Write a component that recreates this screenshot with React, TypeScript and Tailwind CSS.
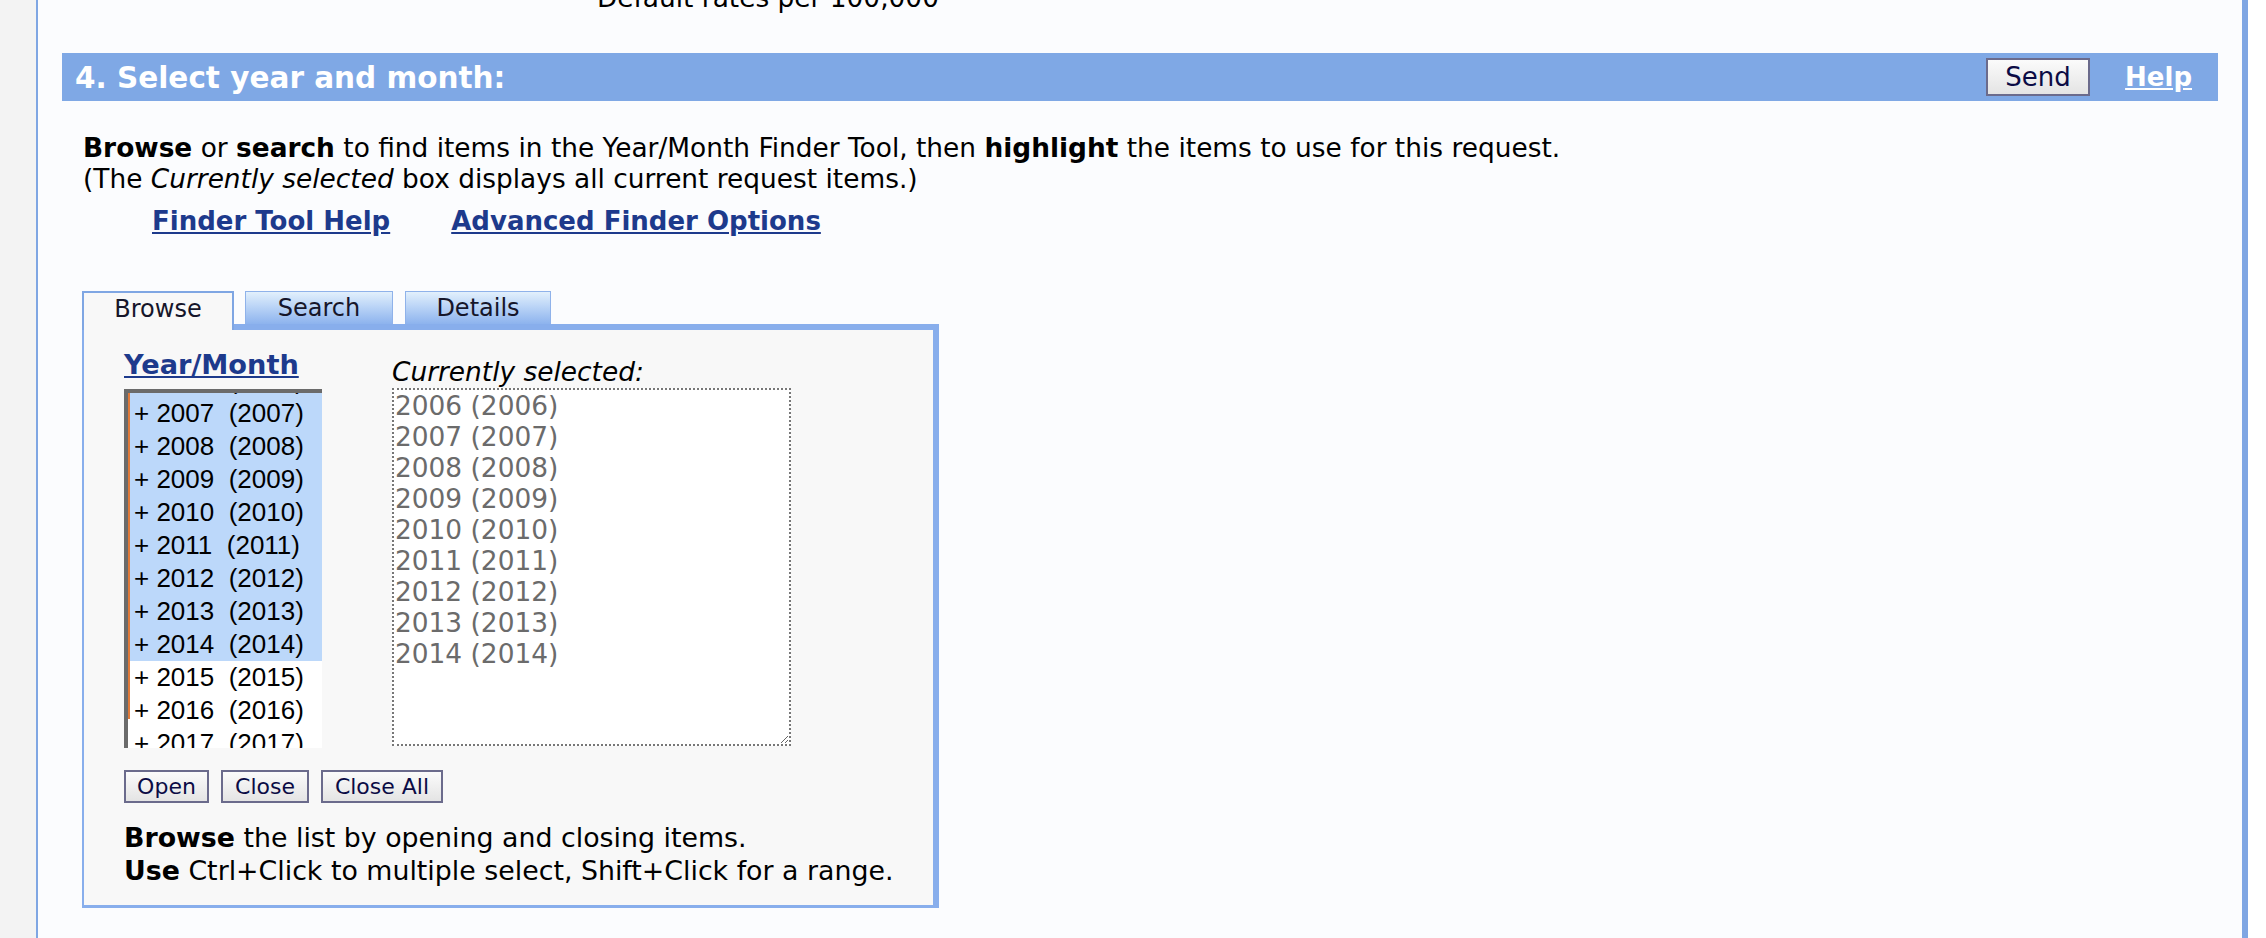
import React from 'react';

const years = ['2006', '2007', '2008', '2009', '2010', '2011', '2012', '2013', '2014', '2015', '2016', '2017'];
const selected = ['2006', '2007', '2008', '2009', '2010', '2011', '2012', '2013', '2014'];

const FormButton = ({ label, className }: { label: string; className: string }) => (
    <button
        type="button"
        className={`flex items-center justify-center border-2 border-[#6b6b8c] bg-linear-to-b from-[#fbfbfb] to-[#e4e4e4] text-[#0b0b45] ${className}`}
    >
        {label}
    </button>
);

const App = () => {
    return (
        <div className="flex min-h-screen w-full overflow-hidden bg-[#f3f3f3] font-['DejaVu_Sans',sans-serif] text-[26.4px] text-black">
            <div className="w-[36px] shrink-0" />
            <div className="w-[2212px] shrink-0 border-l-2 border-r-[6px] border-[#7fa6e3] bg-[#fbfcfe] pb-[40px]">
                {/* tail of the previous section */}
                <div className="-mt-[18px] pl-[559px] leading-[32px]">Default rates per 100,000</div>

                {/* section header */}
                <div className="mx-[24px] mt-[39px] flex h-[48px] items-center bg-[#7fa8e5] pl-[13px] pr-[26px]">
                    <span className="pt-[3px] text-[29.5px] font-bold text-white">4. Select year and month:</span>
                    <div className="ml-auto flex items-center gap-[35px]">
                        <FormButton label="Send" className="h-[38px] w-[104px] text-[26px]" />
                        <a href="#" className="text-[26px] font-bold text-white underline">Help</a>
                    </div>
                </div>

                {/* intro */}
                <div className="mt-[31px] pl-[45px] leading-[31px]">
                    <p>
                        <b>Browse</b> or <b>search</b> to find items in the Year/Month Finder Tool, then <b>highlight</b> the items to use for this request.
                    </p>
                    <p>
                        (The <i>Currently selected</i> box displays all current request items.)
                    </p>
                </div>
                <div className="mt-[11px] flex gap-[61px] pl-[114px] text-[26px] leading-[32px]">
                    <a href="#" className="font-bold text-[#1d3a8c] underline">Finder Tool Help</a>
                    <a href="#" className="font-bold text-[#1d3a8c] underline">Advanced Finder Options</a>
                </div>

                {/* finder tool */}
                <div className="ml-[44px] mt-[54px] w-[857px]">
                    <div className="flex items-end text-[24px]">
                        <div className="relative z-10 -mb-[6px] flex h-[39px] w-[152px] items-center justify-center border-x-2 border-t-2 border-[#7fa6e3] bg-[#f8f8f8] pb-[6px] text-[#16162a]">
                            Browse
                        </div>
                        <div className="ml-[11px] flex h-[33px] w-[148px] items-center justify-center border border-b-0 border-[#8fb2ea] bg-linear-to-b from-[#e2f0fc] to-[#8db3ee] text-[#16162a]">
                            Search
                        </div>
                        <div className="ml-[12px] flex h-[33px] w-[146px] items-center justify-center border border-b-0 border-[#8fb2ea] bg-linear-to-b from-[#e2f0fc] to-[#8db3ee] text-[#16162a]">
                            Details
                        </div>
                    </div>
                    <div className="border-b-[3px] border-l-2 border-r-[6px] border-t-[6px] border-[#88aeec] bg-[#f8f8f8] pb-[18px] pl-[40px] pt-[19px]">
                        <div className="flex items-start">
                            <div className="flex w-[198px] flex-col">
                                <a href="#" className="self-start text-[27.2px] font-bold leading-[32px] text-[#1d3a8c] underline">Year/Month</a>
                                <div className="mt-[8px] h-[359px] overflow-hidden border-l-4 border-t-4 border-[#6b6b6b] bg-white">
                                    <div className="h-full border-l-2 border-[#e07a3a]">
                                        <div className="-mt-[29px] font-['Liberation_Sans',Arial,sans-serif] text-[26px]">
                                            {years.map(y => (
                                                <div
                                                    key={y}
                                                    className={`h-[33px] whitespace-pre pl-[4px] leading-[33px] ${selected.includes(y) ? 'bg-[#bcd8fa]' : ''}`}
                                                >
                                                    {`+ ${y}\u00a0\u00a0(${y})`}
                                                </div>
                                            ))}
                                        </div>
                                    </div>
                                </div>
                            </div>
                            <div className="ml-[70px] flex flex-col">
                                <i className="mt-[7px] leading-[32px]">Currently selected:</i>
                                <textarea
                                    readOnly
                                    value={selected.map(y => `${y} (${y})`).join('\n')}
                                    className="h-[358px] w-[399px] resize border-2 border-dotted border-[#777] bg-white pl-[1px] leading-[31px] text-[#6b6b6b] outline-none"
                                />
                            </div>
                        </div>
                        <div className="mt-[22px] flex gap-[12px] text-[22px]">
                            <FormButton label="Open" className="h-[33px] w-[85px]" />
                            <FormButton label="Close" className="h-[33px] w-[88px]" />
                            <FormButton label="Close All" className="h-[33px] w-[122px]" />
                        </div>
                        <div className="mt-[18px] text-[26.8px] leading-[33px]">
                            <p><b>Browse</b> the list by opening and closing items.</p>
                            <p><b>Use</b> Ctrl+Click to multiple select, Shift+Click for a range.</p>
                        </div>
                    </div>
                </div>
            </div>
            <div className="flex-1 bg-white" />
        </div>
    );
};

export default App;
